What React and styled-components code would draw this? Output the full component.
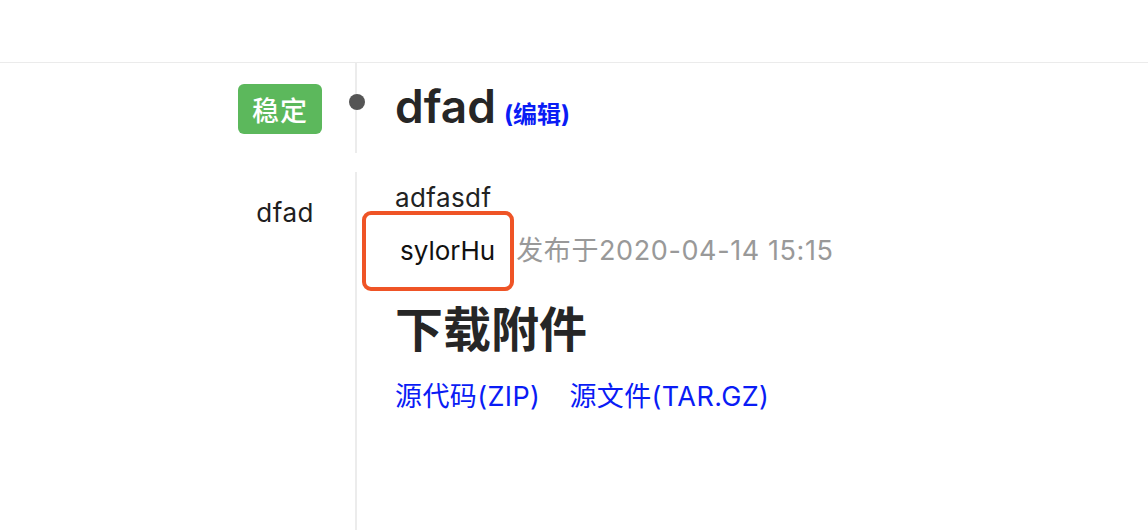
import React from "react";
import styled, { createGlobalStyle } from "styled-components";

const GlobalStyle = createGlobalStyle`
  html, body {
    margin: 0;
    padding: 0;
    background: #fff;
  }
  body {
    font-family: Inter, "Noto Sans CJK SC", sans-serif;
    color: #222;
  }
`;

const Page = styled.div`
  width: 1148px;
  height: 530px;
  overflow: hidden;
  background: #fff;
`;

const TopBar = styled.header`
  height: 62px;
  border-bottom: 1px solid #ebebeb;
`;

const Timeline = styled.div`
  display: flex;
  flex-direction: column;
  gap: 19px;
`;

const Release = styled.section`
  display: grid;
  grid-template-columns: 355px 1fr;
  min-height: ${(p) => p.$minHeight}px;
`;

const Side = styled.div`
  display: flex;
  justify-content: flex-end;
  align-items: flex-start;
  padding-right: ${(p) => p.$padRight}px;
  padding-top: ${(p) => p.$padTop}px;
`;

const Badge = styled.span`
  display: inline-flex;
  align-items: center;
  justify-content: center;
  width: 84px;
  height: 50px;
  border-radius: 6px;
  background: #5cb85c;
  color: #fff;
  font-family: "Noto Sans CJK SC", sans-serif;
  font-size: 27px;
  font-weight: 500;
  letter-spacing: 1px;
`;

const Tag = styled.span`
  font-size: 26px;
  line-height: 30px;
  letter-spacing: 0.5px;
  color: #1e1e1e;
`;

const Body = styled.div`
  position: relative;
  border-left: 2px solid #ececec;
  padding-left: 38px;
  padding-top: ${(p) => p.$padTop}px;
`;

const Dot = styled.span`
  position: absolute;
  left: -8px;
  top: 31px;
  width: 16px;
  height: 16px;
  border-radius: 50%;
  background: #555;
`;

const TitleLine = styled.div`
  display: flex;
  align-items: baseline;
  gap: 8px;
`;

const Title = styled.h1`
  margin: 0;
  font-size: 46px;
  line-height: 55px;
  font-weight: 600;
  color: #262626;
`;

const EditLink = styled.a`
  font-size: 24px;
  font-weight: 700;
  color: #0a1cf5;
  text-decoration: none;
`;

const Description = styled.p`
  margin: 0;
  font-size: 26px;
  line-height: 30px;
  letter-spacing: 0.4px;
  color: #222;
`;

const Meta = styled.div`
  display: flex;
  align-items: baseline;
  margin-top: 23px;
  font-size: 26px;
  line-height: 30px;
`;

const Author = styled.span`
  position: relative;
  margin-left: 5px;
  margin-right: 21px;
  color: #111;
`;

const Highlight = styled.span`
  position: absolute;
  left: -38px;
  top: -25px;
  width: 152px;
  height: 80px;
  box-sizing: border-box;
  border: 4px solid #ef5426;
  border-radius: 9px;
  pointer-events: none;
`;

const Published = styled.span`
  font-size: 27px;
  letter-spacing: 0.6px;
  color: #999;
`;

const SectionTitle = styled.h2`
  margin: 36px 0 0;
  font-size: 48px;
  line-height: 55px;
  font-weight: 700;
  color: #262626;
`;

const Downloads = styled.div`
  display: flex;
  gap: 29px;
  margin-top: 24px;
`;

const DownloadLink = styled.a`
  font-size: 27px;
  line-height: 32px;
  letter-spacing: 0.4px;
  color: #0a1cf5;
  text-decoration: none;
`;

export default function App() {
  return (
    <Page>
      <GlobalStyle />
      <TopBar />
      <Timeline>
        <Release $minHeight={90}>
          <Side $padRight={33} $padTop={21}>
            <Badge>稳定</Badge>
          </Side>
          <Body $padTop={16}>
            <Dot />
            <TitleLine>
              <Title>dfad</Title>
              <EditLink href="#">(编辑)</EditLink>
            </TitleLine>
          </Body>
        </Release>
        <Release $minHeight={360}>
          <Side $padRight={41} $padTop={26}>
            <Tag>dfad</Tag>
          </Side>
          <Body $padTop={11}>
            <Description>adfasdf</Description>
            <Meta>
              <Author>
                sylorHu
                <Highlight />
              </Author>
              <Published>发布于2020-04-14 15:15</Published>
            </Meta>
            <SectionTitle>下载附件</SectionTitle>
            <Downloads>
              <DownloadLink href="#">源代码(ZIP)</DownloadLink>
              <DownloadLink href="#">源文件(TAR.GZ)</DownloadLink>
            </Downloads>
          </Body>
        </Release>
      </Timeline>
    </Page>
  );
}
